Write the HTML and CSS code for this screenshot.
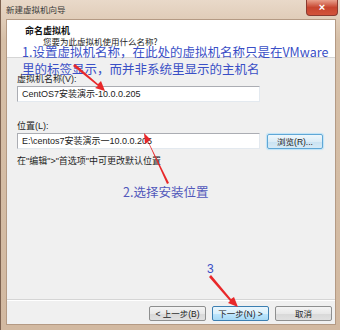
FILE: index.html
```html
<!DOCTYPE html>
<html lang="zh-CN">
<head>
  <meta charset="UTF-8">
  <title>新建虚拟机向导</title>
  <link rel="stylesheet" href="styles.css">
</head>
<body>
  <div class="window">
    <div class="titlebar">
      <span class="title">新建虚拟机向导</span>
      <span class="close">×</span>
    </div>

    <div class="client">
      <div class="header">
        <div class="heading">命名虚拟机</div>
        <div class="subheading">您要为此虚拟机使用什么名称?</div>
      </div>

      <div class="main">
        <label class="field-label">虚拟机名称(V):</label>
        <div class="field-row">
          <div class="textbox">CentOS7安装演示-10.0.0.205</div>
        </div>

        <label class="field-label second">位置(L):</label>
        <div class="field-row">
          <div class="textbox">E:\centos7安装演示一10.0.0.205</div>
          <button class="btn browse">浏览(R)...</button>
        </div>

        <div class="hint">在"编辑"&gt;"首选项"中可更改默认位置</div>
      </div>

      <div class="footer">
        <button class="btn">&lt; 上一步(B)</button>
        <button class="btn primary">下一步(N) &gt;</button>
        <button class="btn">取消</button>
      </div>
    </div>

    <!-- red annotations drawn over the dialog -->
    <div class="note note-1">1.设置虚拟机名称，在此处的虚拟机名称只是在VMware<br>里的标签显示，而并非系统里显示的主机名</div>
    <div class="note note-2">2.选择安装位置</div>
    <div class="note note-3">3</div>

    <svg class="arrows" width="340" height="330" viewBox="0 0 340 330">
      <g fill="#e8282a">
        <polygon points="72,66 74,64 97,84 100,81 104,91 94,88 97,86"/>
        <polygon points="168,183 166,184 147,142 144,144 143,133 150,140 147,141"/>
        <polygon points="208,277 210,275 230,299 233,297 237,307 227,303 229,301"/>
      </g>
    </svg>
  </div>
</body>
</html>
```

FILE: styles.css
```css
* {
  box-sizing: border-box;
  margin: 0;
  padding: 0;
}

body {
  background: #6b5444;
  font-family: "Liberation Sans", "Noto Sans CJK SC", sans-serif;
  font-size: 9px;
  color: #1e1e1e;
}

.window {
  position: relative;
  width: 340px;
  height: 330px;
  background: linear-gradient(#e9d9c9, #d6bfa7 40px, #d2b9a1);
  border-left: 1px solid #7d6250;
  padding: 0 4px 5px 5px;
  display: flex;
  flex-direction: column;
  overflow: hidden;
}

.titlebar {
  height: 19px;
  display: flex;
  align-items: flex-start;
  justify-content: space-between;
}

.title {
  font-family: "Noto Sans CJK SC", sans-serif;
  font-size: 8.5px;
  color: #3a3a3a;
  padding-top: 3px;
}

.close {
  width: 32px;
  height: 16px;
  margin-right: -2px;
  border: 1px solid #8a3a30;
  border-top: none;
  border-radius: 0 0 4px 4px;
  background: linear-gradient(#e9a08c, #c7452f 50%, #d2533a);
  color: #fff;
  font-size: 11px;
  line-height: 14px;
  text-align: center;
  font-weight: bold;
}

.client {
  flex: 1;
  display: flex;
  flex-direction: column;
  background: #f0f0f0;
  border: 1px solid #b49a84;
}

.header {
  height: 38px;
  background: #fff;
  border-bottom: 1px solid #d5d5d5;
  padding: 6px 0 0 18px;
}

.heading {
  font-family: "Noto Sans CJK SC", sans-serif;
  font-weight: bold;
  font-size: 9px;
  line-height: 10px;
  color: #111;
}

.subheading {
  font-family: "Noto Sans CJK SC", sans-serif;
  font-size: 8.5px;
  line-height: 11px;
  padding-left: 18px;
  color: #222;
}

.main {
  flex: 1;
  padding: 15px 0 0 10px;
  display: flex;
  flex-direction: column;
}

.field-label {
  line-height: 12px;
  margin-bottom: 1px;
}

.field-label.second {
  margin-top: 18px;
}

.field-row {
  display: flex;
  align-items: center;
  gap: 7px;
}

.textbox {
  width: 243px;
  height: 16px;
  background: #fff;
  border: 1px solid #abadb3;
  border-color: #abadb3 #e3e9ef #e3e9ef #abadb3;
  padding: 0 4px;
  line-height: 14px;
  color: #222;
}

.hint {
  margin-top: 6px;
  line-height: 12px;
}

.btn {
  font-family: "Liberation Sans", "Noto Sans CJK SC", sans-serif;
  font-size: 8.5px;
  color: #222;
  height: 15px;
  border: 1px solid #8e8f8f;
  border-radius: 2px;
  background: linear-gradient(#f4f4f4, #e8e8e8 50%, #d8d8d8 51%, #e0e0e0);
}

.browse {
  width: 56px;
  border-color: #5fa7d6;
  box-shadow: 0 0 1px 1px #bfe3f7;
  background: linear-gradient(#eef7fc, #dcecf6 50%, #c9e2f2 51%, #d6eaf6);
}

.footer {
  height: 25px;
  border-top: 1px solid #d5d5d5;
  box-shadow: inset 0 1px 0 #fff;
  display: flex;
  align-items: center;
  justify-content: flex-end;
  gap: 6px;
  padding: 2px 3px 0 0;
}

.footer .btn {
  width: 57px;
}

.btn.primary {
  border-color: #3c7fb1;
  background: linear-gradient(#eaf6fd, #d9f0fc 50%, #bee6fd 51%, #a7d9f5);
}

.note {
  position: absolute;
  font-family: "Noto Sans CJK SC", sans-serif;
  font-size: 12.5px;
  color: #3a4fc6;
  white-space: nowrap;
}

.note-1 {
  left: 21px;
  top: 43px;
  line-height: 17px;
}

.note-2 {
  left: 122px;
  top: 184px;
  color: #5158bb;
  line-height: 16px;
}

.note-3 {
  left: 206px;
  top: 262px;
  font-family: "Liberation Sans", sans-serif;
  font-size: 12px;
  line-height: 14px;
}

.arrows {
  position: absolute;
  left: 0;
  top: 0;
  pointer-events: none;
}
```
